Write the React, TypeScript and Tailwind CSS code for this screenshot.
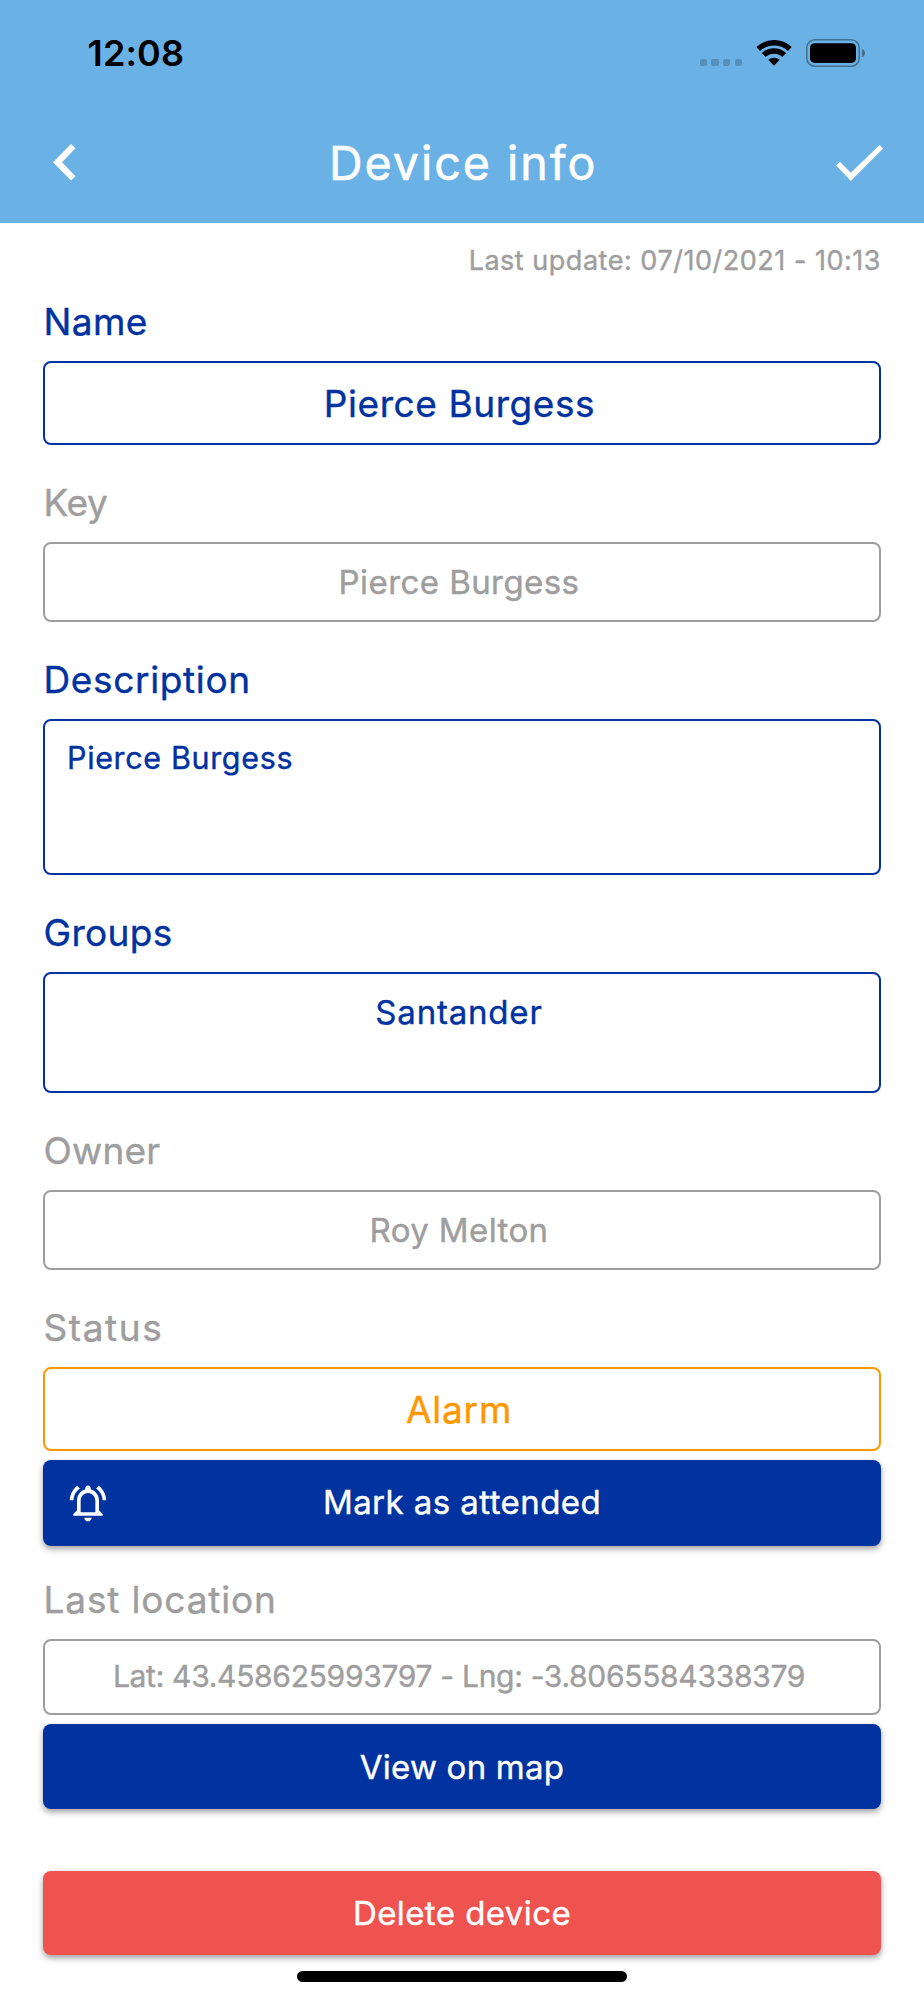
import { type ReactNode } from "react";
import clsx from "clsx";
import { MdOutlineNotificationsActive } from "react-icons/md";

function StatusBar() {
  return (
    <div className="flex h-[104px] items-center justify-between pl-[87.5px] pr-[59px] text-black">
      <span className="mt-0.5 text-[36px] leading-10 font-semibold tracking-[0.16px]">12:08</span>
      <div className="mt-px flex items-center">
        {/* No signal */}
        <div className="mt-[20px] mr-[14px] flex gap-[4.4px]">
          {[0, 1, 2, 3].map((dot) => (
            <span key={dot} className="size-[7.3px] rounded-[2px] bg-[#5590bc]" />
          ))}
        </div>
        <svg className="mr-[14px] h-[27px] w-9" viewBox="0 0 36 27" fill="none" stroke="currentColor">
          <path d="M2.2 10 A23.2 23.2 0 0 1 33.8 10" strokeWidth="5.4" />
          <path d="M7.8 16 A15 15 0 0 1 28.2 16" strokeWidth="5.6" />
          <path d="M18 26.8 L12.3 20.8 A8.6 8.6 0 0 1 23.7 20.8 Z" fill="currentColor" stroke="none" />
        </svg>
        <svg className="h-7 w-[59px]" viewBox="0 0 59 28">
          <rect x="0.8" y="0.8" width="52.4" height="26.4" rx="8" fill="none" stroke="#44708f" strokeWidth="1.5" />
          <rect x="4" y="4.3" width="46" height="19.6" rx="4.5" fill="black" />
          <path d="M56 9.7 Q59 11 59 14 Q59 17 56 18.3 Z" fill="#44708f" />
        </svg>
      </div>
    </div>
  );
}

function NavBar() {
  return (
    <div className="flex h-[118px] items-center justify-between pr-[40px] pl-[52.5px] text-white">
      <button aria-label="Back">
        <svg className="mb-0.5 h-[37px] w-[38px]" viewBox="0 0 38 37" fill="currentColor">
          <path d="M18 0 L22.5 4.3 L9 18.3 L22.5 32.3 L18 36.6 L0 18.3 Z" />
        </svg>
      </button>
      <h1 className="text-[46.5px] leading-[56px] tracking-[2px] [-webkit-text-stroke:0.6px]">Device info</h1>
      <button aria-label="Save">
        <svg className="h-[37px] w-[48px]" viewBox="0 0 48 37" fill="currentColor">
          <path d="M0 20.3 L3.8 16.7 L14.8 27.8 L43.6 0 L47.2 3.4 L14.8 36 Z" />
        </svg>
      </button>
    </div>
  );
}

interface FieldProps {
  label: string;
  labelClass?: string;
  boxClass: string;
  children: ReactNode;
}

function Field({ label, labelClass, boxClass, children }: FieldProps) {
  return (
    <div>
      <div className={clsx("mb-[15px] pl-[0.5px] text-[37px] leading-[48px]", labelClass)}>{label}</div>
      <div className={clsx("flex rounded-[8px] border-2", boxClass)}>{children}</div>
    </div>
  );
}

function ActionButton({ className, icon, children }: { className: string; icon?: ReactNode; children: ReactNode }) {
  return (
    <button
      className={clsx(
        "relative flex w-full items-center justify-center rounded-[8px] text-[33px] leading-10 text-white shadow-[0_3px_6px_rgba(0,0,0,0.38)]",
        className
      )}
    >
      {icon}
      {children}
    </button>
  );
}

export default function App() {
  return (
    <div className="flex h-[2000px] w-[924px] flex-col overflow-hidden bg-white font-[Inter,sans-serif]">
      <header className="h-[222.5px] shrink-0 bg-[#6ab1e6]">
        <StatusBar />
        <NavBar />
      </header>

      <main className="px-[43px] pt-[20.5px] [-webkit-text-stroke:0.4px]">
        <p className="mb-[19px] text-right text-[27px] leading-9 tracking-[0.52px] text-[#9e9e9e]">
          Last update: 07/10/2021 - 10:13
        </p>

        <div className="flex flex-col gap-[34px]">
          <Field
            label="Name"
            labelClass="text-[#0032a0] tracking-[0.4px]"
            boxClass="h-[84px] items-center justify-center border-[#0032a0] pt-px pr-[5px] text-[37px] tracking-[0.58px] text-[#0032a0]"
          >
            Pierce Burgess
          </Field>
          <Field
            label="Key"
            labelClass="text-[#9e9e9e] tracking-[-0.4px]"
            boxClass="h-[80px] items-center justify-center border-[#9e9e9e] pt-[2px] pr-[6px] text-[33px] tracking-[0.43px] text-[#9e9e9e]"
          >
            Pierce Burgess
          </Field>
          <Field
            label="Description"
            labelClass="text-[#0032a0] tracking-[0.65px]"
            boxClass="h-[156px] border-[#0032a0] pt-[17px] pl-[22px] text-[30.5px] leading-10 tracking-[0.65px] text-[#0032a0]"
          >
            Pierce Burgess
          </Field>
          <Field
            label="Groups"
            labelClass="text-[#0032a0] tracking-[0.3px]"
            boxClass="h-[121px] justify-center border-[#0032a0] pt-[18px] pr-[6px] text-[33px] leading-10 tracking-[0.8px] text-[#0032a0]"
          >
            Santander
          </Field>
          <Field
            label="Owner"
            labelClass="text-[#9e9e9e] tracking-[0.2px]"
            boxClass="h-[80px] items-center justify-center border-[#9e9e9e] pt-[2px] pr-[6px] text-[33px] tracking-[0.4px] text-[#9e9e9e]"
          >
            Roy Melton
          </Field>
          <Field
            label="Status"
            labelClass="text-[#9e9e9e] tracking-[1.6px]"
            boxClass="h-[84px] items-center justify-center border-[#ff9800] pt-[2px] pr-[6px] text-[37px] tracking-[0.8px] text-[#ff9800]"
          >
            Alarm
          </Field>
        </div>

        <ActionButton
          className="mt-[9px] mb-[30px] h-[86px] bg-[#0032a0] pb-[2px] tracking-[0.43px]"
          icon={
            <MdOutlineNotificationsActive className="absolute top-[21px] left-[23px] size-[44px] [-webkit-text-stroke:0]" />
          }
        >
          Mark as attended
        </ActionButton>

        <Field
          label="Last location"
          labelClass="text-[#9e9e9e] tracking-[0.85px]"
          boxClass="h-[76px] items-center justify-center border-[#9e9e9e] pr-[6px] pb-px text-[30px] tracking-[-0.3px] text-[#9e9e9e]"
        >
          Lat: 43.458625993797 - Lng: -3.8065584338379
        </Field>
        <ActionButton className="mt-[9px] h-[84.5px] bg-[#0032a0] pt-px tracking-[0.22px]">View on map</ActionButton>
        <ActionButton className="mt-[62.5px] h-[84px] bg-[#ef5350] tracking-[0.42px]">Delete device</ActionButton>
      </main>

      {/* Home indicator */}
      <div className="mx-auto mt-[16px] h-[11px] w-[330px] shrink-0 rounded-full bg-black" />
    </div>
  );
}
